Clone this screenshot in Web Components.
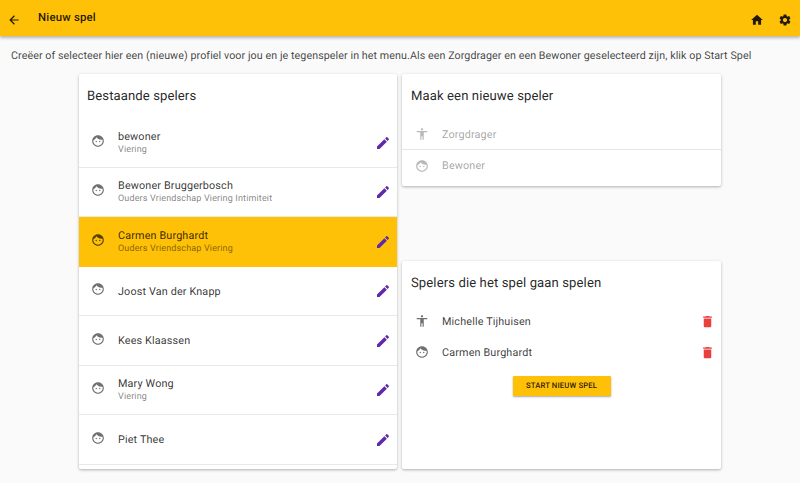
<!DOCTYPE html>
<html lang="nl">
<head>
<meta charset="utf-8">
<title>Nieuw spel</title>
<style>
    html, body { margin: 0; height: 100%; overflow: hidden; background: #fafafa; }
    body { font-family: Roboto, "Liberation Sans", sans-serif; color: rgba(0,0,0,.87); text-rendering: geometricPrecision; }
    [slot="sub"] { display: block; }
</style>
</head>
<body>
<game-page>
    <app-toolbar slot="toolbar">Nieuw spel</app-toolbar>
    <span slot="intro">Creëer of selecteer hier een (nieuwe) profiel voor jou en je tegenspeler in het menu.Als een Zorgdrager en een Bewoner geselecteerd zijn, klik op Start Spel</span>

    <player-card slot="left" heading="Bestaande spelers">
        <player-row icon="face" action="edit">bewoner<span slot="sub">Viering</span></player-row>
        <player-row icon="face" action="edit">Bewoner Bruggerbosch<span slot="sub">Ouders Vriendschap Viering Intimiteit</span></player-row>
        <player-row icon="face" action="edit" selected>Carmen Burghardt<span slot="sub">Ouders Vriendschap Viering</span></player-row>
        <player-row icon="face" action="edit">Joost Van der Knapp</player-row>
        <player-row icon="face" action="edit">Kees Klaassen</player-row>
        <player-row icon="face" action="edit">Mary Wong<span slot="sub">Viering</span></player-row>
        <player-row icon="face" action="edit">Piet Thee</player-row>
    </player-card>

    <player-card slot="new" heading="Maak een nieuwe speler">
        <new-row icon="accessibility">Zorgdrager</new-row>
        <new-row icon="face" last>Bewoner</new-row>
    </player-card>

    <player-card slot="chosen" heading="Spelers die het spel gaan spelen">
        <chosen-row icon="accessibility" first>Michelle Tijhuisen</chosen-row>
        <chosen-row icon="face">Carmen Burghardt</chosen-row>
        <start-button>Start nieuw spel</start-button>
    </player-card>
</game-page>

<script>
const ICONS = {
    back: 'M20 11H7.83l5.59-5.59L12 4l-8 8 8 8 1.41-1.41L7.83 13H20v-2z',
    home: 'M10 20v-6h4v6h5v-8h3L12 3 2 12h3v8z',
    settings: 'M19.14 12.94c.04-.3.06-.61.06-.94 0-.32-.02-.64-.07-.94l2.03-1.58c.18-.14.23-.41.12-.61l-1.92-3.32c-.12-.22-.37-.29-.59-.22l-2.39.96c-.5-.38-1.03-.7-1.62-.94l-.36-2.54c-.04-.24-.24-.41-.48-.41h-3.84c-.24 0-.43.17-.47.41l-.36 2.54c-.59.24-1.13.57-1.62.94l-2.39-.96c-.22-.08-.47 0-.59.22L2.74 8.87c-.12.21-.08.47.12.61l2.03 1.58c-.05.3-.09.63-.09.94s.02.64.07.94l-2.03 1.58c-.18.14-.23.41-.12.61l1.92 3.32c.12.22.37.29.59.22l2.39-.96c.5.38 1.03.7 1.62.94l.36 2.54c.05.24.24.41.48.41h3.84c.24 0 .44-.17.47-.41l.36-2.54c.59-.24 1.13-.56 1.62-.94l2.39.96c.22.08.47 0 .59-.22l1.92-3.32c.12-.22.07-.47-.12-.61l-2.01-1.58zM12 15.6c-1.98 0-3.6-1.62-3.6-3.6s1.62-3.6 3.6-3.6 3.6 1.62 3.6 3.6-1.62 3.6-3.6 3.6z',
    face: 'M9 11.75c-.69 0-1.25.56-1.25 1.25s.56 1.25 1.25 1.25 1.25-.56 1.25-1.25-.56-1.25-1.25-1.25zm6 0c-.69 0-1.25.56-1.25 1.25s.56 1.25 1.25 1.25 1.25-.56 1.25-1.25-.56-1.25-1.25-1.25zM12 2C6.48 2 2 6.48 2 12s4.48 10 10 10 10-4.48 10-10S17.52 2 12 2zm0 18c-4.41 0-8-3.59-8-8 0-.29.02-.58.05-.86 2.36-1.05 4.23-2.98 5.21-5.37C11.07 8.33 14.05 10 17.42 10c.78 0 1.53-.09 2.25-.26.21.71.33 1.47.33 2.26 0 4.41-3.59 8-8 8z',
    accessibility: 'M12 2c1.1 0 2 .9 2 2s-.9 2-2 2-2-.9-2-2 .9-2 2-2zm9 7h-6v13h-2v-6h-2v6H9V9H3V7h18v2z',
    edit: 'M3 17.25V21h3.75L17.81 9.94l-3.75-3.75L3 17.25zM20.71 7.04c.39-.39.39-1.02 0-1.41l-2.34-2.34c-.39-.39-1.02-.39-1.41 0l-1.83 1.83 3.75 3.75 1.83-1.83z',
    delete: 'M6 19c0 1.1.9 2 2 2h8c1.1 0 2-.9 2-2V7H6v12zM19 4h-3.5l-1-1h-5l-1 1H5v2h14V4z'
};

class AppIcon extends HTMLElement {
    connectedCallback() {
        if (this.shadowRoot) return;
        this.attachShadow({ mode: 'open' }).innerHTML = `
            <style>
                :host { display: block; flex: none; width: 15px; height: 15px; color: inherit; }
                svg { display: block; width: 100%; height: 100%; fill: currentColor; }
            </style>
            <svg viewBox="0 0 24 24"><path d="${ICONS[this.getAttribute('name')]}"/></svg>`;
    }
}
customElements.define('app-icon', AppIcon);

const pageTemplate = document.createElement('template');
pageTemplate.innerHTML = `
    <style>
        :host { display: block; }
        .intro {
            padding: 13px 11px 11px;
            font-size: 10.7px;
            line-height: 14px;
            letter-spacing: .08px;
            color: rgba(0,0,0,.75);
            white-space: nowrap;
        }
        .columns {
            display: grid;
            grid-template-columns: 318px 319px;
            column-gap: 5px;
            padding-left: 79px;
        }
        .right {
            display: flex;
            flex-direction: column;
            height: 395px;
            gap: 75px;
        }
        ::slotted([slot="chosen"]) { flex: 1; }
    </style>
    <slot name="toolbar"></slot>
    <div class="intro"><slot name="intro"></slot></div>
    <div class="columns">
        <slot name="left"></slot>
        <div class="right">
            <slot name="new"></slot>
            <slot name="chosen"></slot>
        </div>
    </div>
`;
class GamePage extends HTMLElement {
    constructor() {
        super();
        this.attachShadow({ mode: 'open' });
        this.shadowRoot.appendChild(pageTemplate.content.cloneNode(true));
    }
}
customElements.define('game-page', GamePage);

const toolbarTemplate = document.createElement('template');
toolbarTemplate.innerHTML = `
    <style>
        :host {
            display: flex;
            align-items: center;
            height: 36px;
            box-sizing: border-box;
            padding: 4px 8px 0 7px;
            background: #ffc107;
            box-shadow: 0 2px 3px rgba(0,0,0,.28);
            color: rgba(0,0,0,.87);
            position: relative;
        }
        .title {
            margin: 0 0 6px 17px;
            font-size: 11.4px;
            font-weight: 500;
            letter-spacing: .2px;
        }
        .spacer { flex: 1; }
        .actions { display: flex; gap: 14px; }
        app-icon { width: 14px; height: 14px; }
    </style>
    <app-icon name="back"></app-icon>
    <span class="title"><slot></slot></span>
    <span class="spacer"></span>
    <div class="actions">
        <app-icon name="home"></app-icon>
        <app-icon name="settings"></app-icon>
    </div>
`;
class AppToolbar extends HTMLElement {
    constructor() {
        super();
        this.attachShadow({ mode: 'open' });
        this.shadowRoot.appendChild(toolbarTemplate.content.cloneNode(true));
    }
}
customElements.define('app-toolbar', AppToolbar);

const cardTemplate = document.createElement('template');
cardTemplate.innerHTML = `
    <style>
        :host {
            display: flex;
            flex-direction: column;
            background: #fff;
            box-shadow: 0 1px 3px rgba(0,0,0,.3);
            border-radius: 2px;
        }
        :host([slot="left"]) { height: 395px; }
        h2 {
            margin: 0;
            height: 44px;
            padding: 15px 0 0 9px;
            box-sizing: border-box;
            font-size: 13.1px;
            line-height: 16px;
            font-weight: 400;
            letter-spacing: .1px;
            color: rgba(0,0,0,.87);
        }
        :host([slot="left"]) h2 { padding-left: 8px; }
    </style>
    <h2></h2>
    <slot></slot>
`;
class PlayerCard extends HTMLElement {
    constructor() {
        super();
        this.attachShadow({ mode: 'open' });
        this.shadowRoot.appendChild(cardTemplate.content.cloneNode(true));
        this.shadowRoot.querySelector('h2').textContent = this.getAttribute('heading');
    }
}
customElements.define('player-card', PlayerCard);

class PlayerRow extends HTMLElement {
    connectedCallback() {
        if (this.shadowRoot) return;
        this.attachShadow({ mode: 'open' }).innerHTML = `
            <style>
                :host {
                    display: flex;
                    align-items: center;
                    height: 49.5px;
                    box-sizing: border-box;
                    padding: 0 6px 0 12px;
                    border-bottom: 1px solid #e9e9e9;
                    color: rgba(0,0,0,.8);
                }
                :host([selected]) { background: #ffc107; border-bottom-color: #ffc107; }
                .face { width: 14px; height: 14px; margin: 0 13px 3px 0; color: rgba(0,0,0,.56); }
                :host([selected]) .face { color: rgba(0,0,0,.66); }
                .text { flex: 1; min-width: 0; padding-top: 1px; }
                .text.single { padding-top: 2px; }
                .name { font-size: 10.8px; line-height: 14px; letter-spacing: .15px; }
                .sub { font-size: 9px; line-height: 12px; letter-spacing: .15px; color: rgba(0,0,0,.5); }
                .action { width: 16px; height: 16px; margin-top: 1px; color: #5e2aa9; }
            </style>
            <app-icon class="face" name="${this.getAttribute('icon')}"></app-icon>
            <div class="text">
                <div class="name"><slot></slot></div>
                <div class="sub"><slot name="sub"></slot></div>
            </div>
            <app-icon class="action" name="${this.getAttribute('action')}"></app-icon>`;
        if (!this.querySelector('[slot="sub"]')) {
            this.shadowRoot.querySelector('.sub').style.display = 'none';
            this.shadowRoot.querySelector('.text').classList.add('single');
        }
    }
}
customElements.define('player-row', PlayerRow);

class NewRow extends HTMLElement {
    connectedCallback() {
        if (this.shadowRoot) return;
        this.attachShadow({ mode: 'open' }).innerHTML = `
            <style>
                :host {
                    display: flex;
                    align-items: center;
                    height: 31.5px;
                    box-sizing: border-box;
                    padding: 2px 13px 0;
                    border-bottom: 1px solid #e6e6e6;
                    font-size: 10.8px;
                    letter-spacing: .15px;
                    color: rgba(0,0,0,.38);
                }
                :host([last]) { border-bottom: 0; height: 36px; padding: 0 13px 4px; }
                app-icon { width: 14px; height: 14px; margin-right: 13px; color: rgba(0,0,0,.28); }
            </style>
            <app-icon name="${this.getAttribute('icon')}"></app-icon>
            <span><slot></slot></span>`;
    }
}
customElements.define('new-row', NewRow);

class ChosenRow extends HTMLElement {
    connectedCallback() {
        if (this.shadowRoot) return;
        this.attachShadow({ mode: 'open' }).innerHTML = `
            <style>
                :host {
                    display: flex;
                    align-items: center;
                    height: 31px;
                    padding: 0 6px 0 13px;
                    font-size: 10.8px;
                    letter-spacing: .15px;
                    color: rgba(0,0,0,.78);
                }
                :host([first]) { margin-top: 1px; }
                .who { width: 14px; height: 14px; margin-right: 13px; color: rgba(0,0,0,.56); }
                span { flex: 1; }
                .bin { color: #ea3f3f; }
            </style>
            <app-icon class="who" name="${this.getAttribute('icon')}"></app-icon>
            <span><slot></slot></span>
            <app-icon class="bin" name="delete"></app-icon>`;
    }
}
customElements.define('chosen-row', ChosenRow);

const buttonTemplate = document.createElement('template');
buttonTemplate.innerHTML = `
    <style>
        :host { display: flex; justify-content: center; padding-top: 8px; }
        button {
            width: 98px;
            height: 20px;
            padding: 0;
            border: 0;
            border-radius: 1px;
            background: #ffc107;
            box-shadow: 0 1px 2px rgba(0,0,0,.35);
            font: 500 7.7px/20px Roboto, "Liberation Sans", sans-serif;
            letter-spacing: .15px;
            color: rgba(0,0,0,.87);
            text-transform: uppercase;
            text-rendering: geometricPrecision;
        }
    </style>
    <button><slot></slot></button>
`;
class StartButton extends HTMLElement {
    constructor() {
        super();
        this.attachShadow({ mode: 'open' });
        this.shadowRoot.appendChild(buttonTemplate.content.cloneNode(true));
    }
}
customElements.define('start-button', StartButton);
</script>
</body>
</html>
